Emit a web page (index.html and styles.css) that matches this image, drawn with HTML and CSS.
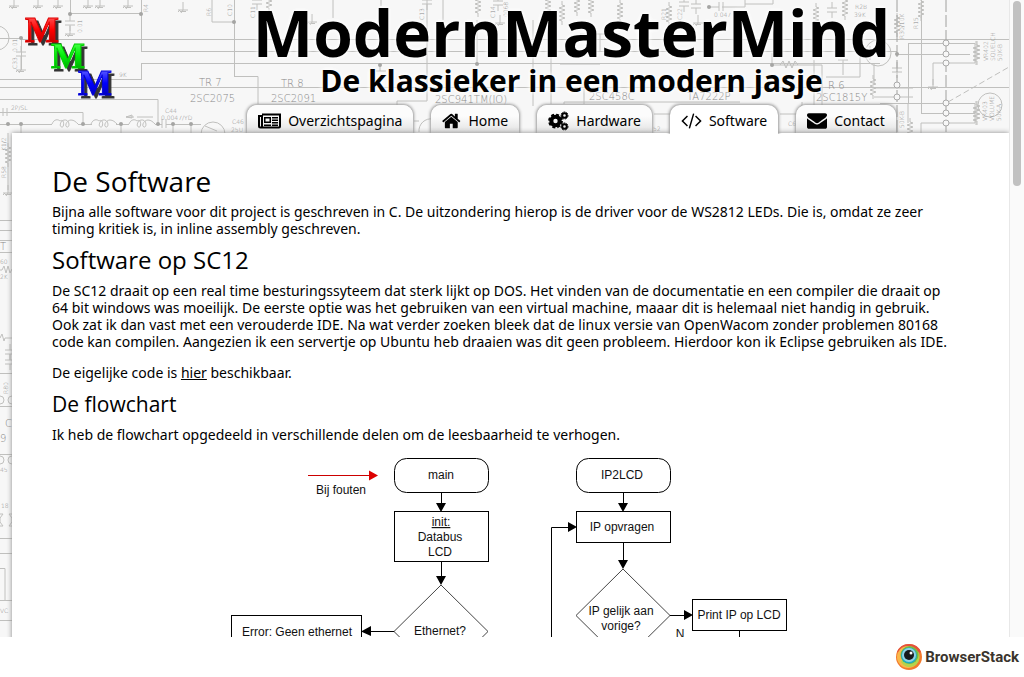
FILE: index.html
```html
<!DOCTYPE html>
<html lang="nl">
<head>
<meta charset="utf-8">
<title>ModernMasterMind - Software</title>
<link rel="stylesheet" href="styles.css">
</head>
<body>
<div class="window">
  <div class="page">
    <svg class="schematic" width="1009" height="637" viewBox="0 0 1009 637" aria-hidden="true">
      <defs>
        <g id="gnd"><path d="M0-8V0M-5 0H5M-3 1.500H3M-5 2L-3 0M-2 3L0 0"/></g>
        <g id="res"><path d="M0-12V-8L3-7-3-5 3-3-3-1 3 1-3 3 3 5-3 7 0 8V12"/></g>
        <g id="cap"><path d="M0-8V-2M-5-2H5M-5 2H5M0 2V8"/></g>
        <g id="coil"><path d="M0 0C2-5 6-5 8-3 13-6 12 4 10 3 7 3 8-3 12-4 18-5 18 4 15 3 12 2 15-4 19-4 22-4 24-2 26 0"/></g>
      </defs>
      <g class="wire">
        <circle cx="-3" cy="38" r="12"/><path d="M0 38.500H21M21 39.500H1009M21.500 38V70M70.500 0V14M70 13.500H141M141.500 0V51M141 51.500H897M141.500 80V64M141 63.500H880M0 79.500H141M0 87.500H1009M234.500 0V76M234 76.500H258V104M212 0V22H234M0 99.500H158V124M0 112.500H83V124M0 124.500H52M78 124.500H92M116 124.500H129M155 124.500H162M166 124.500H201M126 117H134M137 117H153M21 124V133M121 124V133M173 124V133M191 124V133"/>
        <path d="M126 117l6-2v3z"/><circle cx="213" cy="134" r="12"/><path d="M205 126l12 5M162 119v9M166 119v9M3 108v8M7 108v8"/>
        <use href="#coil" x="52" y="124"/><use href="#coil" x="91" y="124"/><use href="#coil" x="129" y="124"/>
        <use href="#cap" x="21" y="54"/><use href="#gnd" x="21" y="70"/><use href="#cap" x="70" y="23"/><use href="#gnd" x="70" y="34"/>
        <use href="#gnd" x="14" y="6"/><use href="#gnd" x="38" y="6"/><use href="#gnd" x="58" y="6"/><use href="#gnd" x="88" y="6"/><use href="#gnd" x="100" y="6"/><use href="#gnd" x="128" y="6"/><use href="#gnd" x="183" y="10"/>
        <path d="M333 0V18M381 0V6M427 0V101H397V106M443 0V20M533 20V106M551 52V104M477 20V64M380 64V71M376 71H386M564 104V102H740M584 89V104M802 102V133M419 132a12 12 0 0 1 14-13M414 121H419M654 114H671M780 114H797"/>
        <use href="#cap" x="257" y="2"/><use href="#res" x="269" y="0"/><use href="#gnd" x="312" y="22"/><use href="#cap" x="427" y="2"/><use href="#res" x="478" y="5"/><use href="#cap" x="498" y="3"/><use href="#gnd" x="500" y="23"/><use href="#res" x="548" y="5"/><use href="#res" x="562" y="13"/><use href="#res" x="577" y="4"/><use href="#res" x="591" y="5"/><use href="#res" x="620" y="11"/><use href="#res" x="669" y="14"/><use href="#cap" x="684" y="4"/><use href="#cap" x="696" y="6"/><use href="#gnd" x="698" y="23"/><use href="#res" x="816" y="15"/><use href="#cap" x="832" y="10"/><use href="#res" x="845" y="8"/>
        <path d="M709 7H719M722 7H745V0M719 2v9M723 2v9M745 4H773V0M772 53V65H810M780 65l3-4 3 7 3-7 3 7 3-7 3 4M814 60V133M843 60V75M838 60H848M860 45V77H826M810 65H822V110"/>
        <circle cx="878" cy="53" r="13"/><path d="M870 46V60M870 53H862M874 64V85M874 88H913M874 97H913M560 64H600M580 34H620M600 34V52"/>
        <use href="#res" x="873" y="87"/><use href="#res" x="897" y="25"/><use href="#cap" x="897" y="70"/>
        <path class="dash" d="M897 0V133M946 0V133"/><path d="M921.500 0V113M921 113.500H975M908.500 104V43M908 43.500H975V63H933V85M897 54.500H970M880 103.500H975V123H921V133M908 104V123"/><path class="slope" d="M948 102L1009 67"/>
        <use href="#res" x="921" y="9"/><use href="#res" x="976" y="53"/><use href="#res" x="977" y="53"/><use href="#res" x="976" y="113"/><use href="#res" x="977" y="113"/><use href="#gnd" x="933" y="87"/><use href="#res" x="910" y="130"/><circle cx="990" cy="105" r="12"/>
      </g>
      <g class="node"><circle cx="946" cy="43" r="3"/><circle cx="946" cy="54" r="3"/><circle cx="946" cy="63" r="3"/><circle cx="946" cy="103" r="3"/><circle cx="946" cy="113" r="3"/><circle cx="946" cy="123" r="3"/><circle cx="897" cy="85" r="3"/><circle cx="897" cy="97" r="3"/></g>
      <g class="dot"><circle cx="21" cy="38" r="2"/><circle cx="70" cy="14" r="2"/><circle cx="141" cy="14" r="2"/><circle cx="234" cy="22" r="2"/><circle cx="8" cy="124" r="2"/><circle cx="21" cy="124" r="2"/><circle cx="83" cy="124" r="2"/><circle cx="121" cy="124" r="2"/><circle cx="158" cy="124" r="2"/><circle cx="173" cy="124" r="2"/><circle cx="191" cy="124" r="2"/><circle cx="477" cy="64" r="2"/><circle cx="709" cy="7" r="2"/><circle cx="772" cy="65" r="2"/><circle cx="897" cy="54" r="2"/><circle cx="380" cy="65" r="2"/></g>
      <g class="part">
        <text x="199" y="86">TR 7</text><text x="190" y="102">2SC2075</text><text x="281" y="87">TR 8</text><text x="271" y="102">2SC2091</text><text x="435" y="103">2SC941TM(IO)</text><text x="589" y="100">2SC458C</text><text x="687" y="100">TA7222P</text><text x="816" y="101">2SC1815Y</text><text x="828" y="89">R 6</text>
      </g>
      <g class="small">
        <text x="11" y="110">2P/SL</text><text x="165" y="113">C44</text><text x="161" y="120">0.0047/YD</text><text x="119" y="77">9K</text><text x="232" y="124">C46</text><text x="231" y="132">25U</text><text x="714" y="17">0.047</text><text x="855" y="9">R2B</text><text x="854" y="17">39K</text><text x="653" y="131">52</text><text x="788" y="126">C6</text>
        <text transform="translate(17 52) rotate(-90)">0.01</text><text transform="translate(17 69) rotate(-90)">C33</text><text transform="translate(82 33) rotate(-90)">0.01</text><text transform="translate(148 12) rotate(-90)">R4</text><text transform="translate(211 16) rotate(-90)">R6</text><text transform="translate(232 16) rotate(-90)">C10</text><text transform="translate(255 18) rotate(-90)">C11</text><text transform="translate(495 18) rotate(-90)">C14</text><text transform="translate(508 19) rotate(-90)">.0068</text><text transform="translate(424 20) rotate(-90)">C13</text><text transform="translate(666 20) rotate(-90)">R21</text><text transform="translate(682 20) rotate(-90)">C22</text>
        <text transform="translate(918 29) rotate(-90)">R15</text><text transform="translate(904 39) rotate(-90)">R30/10K</text><text transform="translate(904 128) rotate(-90)">50K-B</text>
        <text transform="translate(988 61) rotate(-90)">VR402</text><text transform="translate(995 61) rotate(-90)">SQUELCH</text><text transform="translate(1002 61) rotate(-90)">50K-B</text><text transform="translate(987 121) rotate(-90)">VR403</text><text transform="translate(994 121) rotate(-90)">VOLUME</text><text transform="translate(1001 121) rotate(-90)">50K-A</text>
      </g>
      <g class="wire">
        <path d="M8 133V190M0 220.500H12M0 230.500H12M0 240.500H12M0 252.500H12M0 270l2 0 2-4 2 7 2-7 2 7 2-4M0 338l2-4 2 7 1-3H12M0 373.500H12M0 406.500H12M0 454.500H12M0 514H3M9 514H12M0 526H3M9 526H12M0 538.500H12M0 553.500H12M0 568.500H5V600M0 600.500H12M0 620.500H12"/>
        <use href="#res" x="8" y="155"/><use href="#gnd" x="8" y="193"/><use href="#cap" x="10" y="352"/><use href="#cap" x="10" y="362"/><circle cx="0" cy="400" r="4"/><circle cx="12" cy="400" r="4"/><circle cx="0" cy="460" r="4"/><circle cx="12" cy="460" r="4"/><path d="M3 514l-3 4v4l3 4M9 514l3 4v4l-3 4"/>
      </g>
      <g class="part"><text x="0" y="250">T</text><text x="5" y="427">C</text><text x="0" y="442">9</text></g>
      <g class="small"><text x="0" y="264">60</text><text x="0" y="279">2K</text><text x="1" y="508">18</text><text x="0" y="472">45</text><text x="0" y="613">VC</text><text transform="translate(6 178) rotate(-90)">R58</text><text transform="translate(6 151) rotate(-90)">K1/2</text><text transform="translate(8 394) rotate(-90)">R80</text></g>
    </svg>

    <header class="header">
      <svg class="logo" width="134" height="104" viewBox="0 0 134 104" role="img" aria-label="MMM">
        <defs>
          <linearGradient id="red" x2="0" y2="1"><stop offset=".2" stop-color="#ff4a4a"/><stop offset=".5" stop-color="#f00"/><stop offset=".9" stop-color="#a00"/></linearGradient>
          <linearGradient id="green" x2="0" y2="1"><stop offset=".2" stop-color="#4f4"/><stop offset=".5" stop-color="#00ee08"/><stop offset=".9" stop-color="#090"/></linearGradient>
          <linearGradient id="blue" x2="0" y2="1"><stop offset=".2" stop-color="#55f"/><stop offset=".5" stop-color="#00f"/><stop offset=".9" stop-color="#00a"/></linearGradient>
        </defs>
        <g class="logo-letters">
          <text x="25" y="42" fill="url(#red)" stroke="#e00000">M</text><text x="51" y="68" fill="url(#green)" stroke="#00d000">M</text><text x="78" y="95" fill="url(#blue)" stroke="#0000dc">M</text>
        </g>
      </svg>
      <div class="banner">
        <div class="site-title">ModernMasterMind</div>
        <div class="site-subtitle">De klassieker in een modern jasje</div>
        <nav class="tabs">
          <a class="tab" href="#"><svg width="23" height="20" viewBox="0 0 23 20"><path class="line" d="M4 3.500H22V15.500Q22 16.500 21 16.500H2.500Q1 16.500 1 15V5H4V15Q4 16.500 2.500 16.500"/><path fill-rule="evenodd" d="M6 6h7v6H6zM7.500 7.500v3h4v-3zM14 6h6v1.500h-6zM14 8.500h6V10h-6zM14 11h6v1.500h-6zM6 13.500h7V15H6zM14 13.500h6V15h-6z"/></svg>Overzichtspagina</a>
          <a class="tab" href="#"><svg width="19" height="20" viewBox="64 0 1702 1792"><path d="M1472 992v480q0 26-19 45t-45 19h-384v-384h-256v384h-384q-26 0-45-19t-19-45v-480q0-1 .5-3t.5-3l575-474 575 474q1 2 1 6zm223-69l-62 74q-8 9-21 11h-3q-13 0-21-7l-692-577-692 577q-12 8-24 7-13-2-21-11l-62-74q-8-10-7-23.500t11-21.500l719-599q32-26 76-26t76 26l244 204v-195q0-14 9-23t23-9h192q14 0 23 9t9 23v408l219 182q10 8 11 21.500t-7 23.500z"/></svg>Home</a>
          <a class="tab" href="#"><svg width="21" height="20" viewBox="0 0 21 20"><circle class="gear" cx="7.500" cy="10" r="4.200"/><circle class="teeth" cx="7.500" cy="10" r="6.400"/><g class="cog"><circle cx="16.500" cy="4.500" r="2.300"/><circle cx="16.500" cy="15.500" r="2.300"/></g><g class="cog-teeth"><circle cx="16.500" cy="4.500" r="3.500"/><circle cx="16.500" cy="15.500" r="3.500"/></g></svg>Hardware</a>
          <a class="tab active" href="#" aria-current="page"><svg width="21" height="20" viewBox="0 64 1920 1792"><path d="M617 1399l-50 50q-10 10-23 10t-23-10l-466-466q-10-10-10-23t10-23l466-466q10-10 23-10t23 10l50 50q10 10 10 23t-10 23l-393 393 393 393q10 10 10 23t-10 23zm591-1067l-373 1291q-4 13-15.500 19.500t-23.500 2.500l-62-17q-13-4-19.500-15.500t-2.500-24.500l373-1291q4-13 15.500-19.500t23.500-2.500l62 17q13 4 19.500 15.500t2.500 24.500zm657 651l-466 466q-10 10-23 10t-23-10l-50-50q-10-10-10-23t10-23l393-393-393-393q-10-10-10-23t10-23l50-50q10-10 23-10t23 10l466 466q10 10 10 23t-10 23z"/></svg>Software</a>
          <a class="tab" href="#"><svg width="20" height="20" viewBox="0 64 1792 1792"><path d="M1792 710v794q0 66-47 113t-113 47h-1472q-66 0-113-47t-47-113v-794q44 49 101 87 362 246 497 345 57 42 92.500 65.500t94.500 48 110 24.500h2q51 0 110-24.500t94.500-48 92.500-65.500q170-123 498-345 57-39 100-87zm0-294q0 79-49 151t-122 123q-376 261-468 325-10 7-42.500 31t-54 38.500-52 32.500-57.500 27-50 9h-2q-23 0-50-9t-57.500-27-52-32.500-54-38.500-42.500-31q-91-64-262-182.500t-205-142.500q-62-42-117-115.500t-55-136.500q0-78 41.500-130t118.500-52h1472q65 0 112.500 47t47.500 113z"/></svg>Contact</a>
        </nav>
      </div>
    </header>

    <main class="content">
      <h1>De Software</h1>
      <p>Bijna alle software voor dit project is geschreven in C. De uitzondering hierop is de driver voor de WS2812 LEDs. Die is, omdat ze zeer<br>
        timing kritiek is, in inline assembly geschreven.</p>
      <h2>Software op SC12</h2>
      <p>De SC12 draait op een real time besturingssyteem dat sterk lijkt op DOS. Het vinden van de documentatie en een compiler die draait op<br>
        64 bit windows was moeilijk. De eerste optie was het gebruiken van een virtual machine, maaar dit is helemaal niet handig in gebruik.<br>
        Ook zat ik dan vast met een verouderde IDE. Na wat verder zoeken bleek dat de linux versie van OpenWacom zonder problemen 80168<br>
        code kan compilen. Aangezien ik een servertje op Ubuntu heb draaien was dit geen probleem. Hierdoor kon ik Eclipse gebruiken als IDE.</p>
      <p>De eigelijke code is <a href="#">hier</a> beschikbaar.</p>
      <h3>De flowchart</h3>
      <p>Ik heb de flowchart opgedeeld in verschillende delen om de leesbaarheid te verhogen.</p>
      <svg class="flowchart" width="560" height="260" viewBox="231 458 560 260" role="img" aria-label="Flowchart">
        <path class="error" d="M308 475.500H370"/><path class="error-head" d="M369 470.500V480.500L378 475.500z"/>
        <g class="shape">
          <rect x="394.500" y="458.500" width="94" height="34" rx="12"/><rect x="394.500" y="511.500" width="94" height="50"/>
          <path d="M441.500 493V505M441.500 562V578M394 631.500H368M551.500 720V527.500H570M623.500 493V505M623.500 543V562M670 615.500H686M739.500 631V720"/>
          <rect x="231.500" y="615.500" width="130" height="32"/><path class="diamond" d="M441 585l47 46.500-47 46.500-47-46.500z"/>
          <rect x="576.500" y="458.500" width="94" height="34" rx="12"/><rect x="576.500" y="511.500" width="94" height="31"/><path class="diamond" d="M623 569l47 46.500-47 46.500-47-46.500z"/><rect x="692.500" y="599.500" width="94" height="31"/>
        </g>
        <path d="M436 503H446L441 512zM436 576H446L441 585zM371 626V636L361 631.500zM568 522V532L577 527zM618 503H628L623 512zM618 560H628L623 569zM684 610V620L693 615z"/>
        <g class="caption"><text x="341" y="494">Bij fouten</text><text x="441" y="479">main</text><text class="underlined" x="441" y="526">init:</text><text x="440" y="541">Databus</text><text x="440" y="556">LCD</text><text x="297" y="636">Error: Geen ethernet</text><text x="440" y="635">Ethernet?</text><text x="622" y="479">IP2LCD</text><text x="622" y="531">IP opvragen</text><text x="621" y="615">IP gelijk aan</text><text x="621" y="630">vorige?</text><text x="739" y="619">Print IP op LCD</text><text x="680" y="638">N</text></g>
      </svg>
    </main>
  </div>
  <div class="scrollbar" aria-hidden="true"><div class="thumb"></div></div>
</div>
<footer class="footer">
  <svg width="26" height="26" viewBox="0 0 26 26" aria-hidden="true"><circle cx="13" cy="13" r="13" fill="#f37a2c"/><path d="M1 8A13 13 0 0 1 25 8L13 13z" fill="#e5503c"/><circle cx="12" cy="13" r="11" fill="#f9b84a"/><path d="M13 3a10 10 0 1 1-8 15z" fill="#b5d34b"/><circle cx="13.500" cy="11" r="9" fill="#7bb83e"/><circle cx="13" cy="11.500" r="8" fill="#20aebc"/><circle cx="13" cy="11" r="7" fill="#90d2e6"/><circle cx="13" cy="11" r="5" fill="#17191c"/><circle cx="15" cy="9" r="1.500" fill="#fff"/></svg>
  <span>BrowserStack</span>
</footer>
</body>
</html>
```
FILE: styles.css
```css
* { box-sizing: border-box; }

body {
  margin: 0;
  height: 100vh;
  display: flex;
  flex-direction: column;
  overflow: hidden;
  background: #fff;
  color: #000;
  font: 14px/17px "Noto Sans", "Open Sans", sans-serif;
}

.window { flex: 1; min-height: 0; display: flex; }

.page {
  position: relative;
  flex: 1;
  min-width: 0;
  overflow: hidden;
  background: #f7f7f7;
}

/* circuit diagram behind the page */
.schematic { position: absolute; top: 0; left: 0; }
.wire { fill: none; stroke: #c0c0be; }
.wire .dash { stroke: #a0a09e; stroke-dasharray: 12 3; }
.wire .slope { stroke-dasharray: 6 3; }
.node { fill: #f7f7f7; stroke: #aaa; }
.dot { fill: #a5a5a3; }
.part, .small { fill: #888; font-family: "DejaVu Sans", sans-serif; font-weight: 200; }
.part { font-size: 10px; }
.small { font-size: 6px; }

.header { position: relative; display: flex; height: 133px; }
.logo { flex: none; font: bold 36px "Liberation Serif", serif; }
.logo-letters { filter: drop-shadow(3px 3px 0 #333); }

.banner { flex: 1; text-align: center; font-family: "Open Sans", sans-serif; }
.site-title, .site-subtitle { font-weight: bold; text-shadow: 0 0 5px #fff, 0 0 5px #fff; }
.site-title { font-size: 64px; line-height: 66px; }
.site-subtitle { font-size: 30px; line-height: 30px; }

.tabs { display: flex; justify-content: center; gap: 18px; padding-top: 9px; font-family: "Noto Sans", sans-serif; }
.tab {
  display: flex;
  align-items: center;
  gap: 7px;
  height: 28px;
  padding: 3px 11px 0;
  border-radius: 10px 10px 0 0;
  background: linear-gradient(#fcfcfc 40%, #e2e2e2);
  box-shadow: 0 0 3px 1px #999;
  color: #000;
  text-decoration: none;
}
.tab.active { z-index: 1; height: 29px; padding-bottom: 1px; background: #fff; clip-path: inset(-5px -5px 0 -5px); }
.tab .line { fill: none; stroke: #000; stroke-width: 2; }
.gear, .teeth, .cog, .cog-teeth { fill: none; stroke: #000; }
.gear { stroke-width: 4; }
.teeth { stroke-width: 2; stroke-dasharray: 3 2; }
.cog { stroke-width: 2; }
.cog-teeth { stroke-width: 1; stroke-dasharray: 2 1; }

.content {
  position: relative;
  margin-left: 12px;
  min-height: 100%;
  padding: 29px 40px;
  background: #fff;
  box-shadow: 0 0 5px #888;
}
.content h1, .content h2, .content h3 { margin: 0; font-family: "Open Sans", sans-serif; font-weight: normal; }
.content h1 { font-size: 28px; line-height: 38px; margin-bottom: 3px; }
.content h2 { font-size: 24px; line-height: 32px; margin: 7px 0 6px; }
.content h3 { font-size: 21px; line-height: 28px; margin: 9px 0 8px; }
.content p { margin: 0; }
.content p + p { margin-top: 14px; }
.content a { color: #000; }

.flowchart { display: block; margin: 15px auto 0; }
.shape { fill: #fff; stroke: #000; }
.diamond { stroke: #444; }
.error { stroke: #c00; }
.error-head { fill: #d00; }
.caption { font: 12px "Liberation Sans", sans-serif; fill: #111; text-anchor: middle; }
.underlined { text-decoration: underline; }

.scrollbar { flex: none; width: 15px; padding: 1px 3px; background: #fafafa; border-left: 1px solid #e8e8e8; }
.thumb { width: 8px; height: 185px; border-radius: 4px; background: #c1c1c1; }

.footer {
  display: flex;
  flex: none;
  align-items: center;
  justify-content: flex-end;
  gap: 3px;
  height: 40px;
  padding-right: 5px;
  color: #3a342d;
  font: bold 15px "Roboto", sans-serif;
}
```
